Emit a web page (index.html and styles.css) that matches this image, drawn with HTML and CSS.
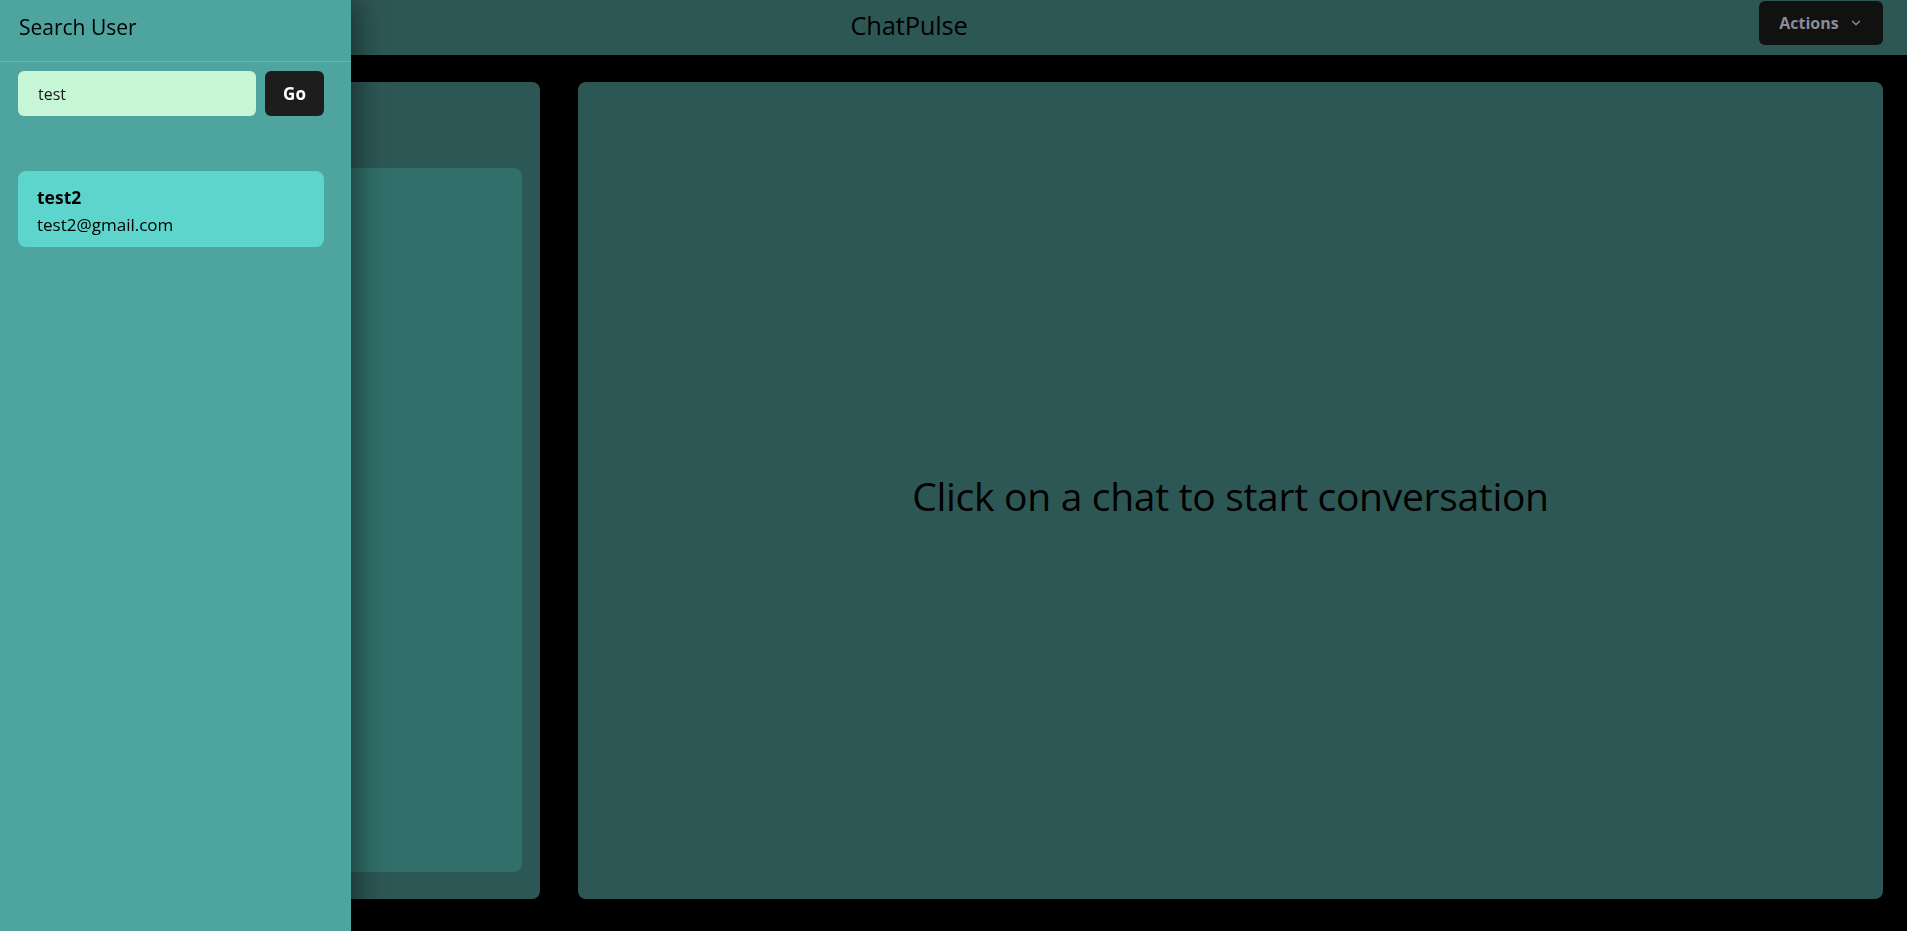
FILE: index.html
```html
<!DOCTYPE html>
<html lang="en">
<head>
<meta charset="utf-8">
<title>ChatPulse</title>
<link rel="stylesheet" href="styles.css">
</head>
<body>
<div class="app">
  <header class="topbar">
    <button class="search-btn" aria-label="Search">
      <svg width="16" height="16" viewBox="0 0 24 24" fill="none" stroke="#ccc" stroke-width="2"><circle cx="11" cy="11" r="7"/><path d="M21 21l-5-5"/></svg>
    </button>
    <div class="brand">ChatPulse</div>
    <button class="actions-btn">Actions
      <svg class="chev" width="14" height="14" viewBox="0 0 24 24" fill="none" stroke="currentColor" stroke-width="2.4" stroke-linecap="round" stroke-linejoin="round"><path d="M6 9l6 6 6-6"/></svg>
    </button>
  </header>
  <main class="workspace">
    <section class="chats-panel">
      <div class="chats-head">My Chats</div>
      <div class="chats-list"></div>
    </section>
    <section class="chat-panel">
      <p class="empty-msg">Click on a chat to start conversation</p>
    </section>
  </main>
</div>

<aside class="drawer">
  <div class="drawer-head">Search User</div>
  <div class="drawer-body">
    <div class="search-row">
      <input class="search-input" type="text" value="test">
      <button class="go-btn">Go</button>
    </div>
    <div class="result-card">
      <div class="result-name">test2</div>
      <div class="result-email">test2@gmail.com</div>
    </div>
  </div>
</aside>
</body>
</html>
```
FILE: styles.css
```css
* { box-sizing: border-box; }
html, body { margin: 0; padding: 0; height: 100%; }
body {
  background: #000;
  font-family: "Open Sans", "Noto Sans", "Liberation Sans", sans-serif;
  color: #000;
  overflow: hidden;
}
.app { display: flex; flex-direction: column; height: 100vh; }

.topbar {
  height: 55px;
  flex: none;
  background: #2d5755;
  display: flex;
  justify-content: space-between;
  align-items: center;
  padding: 0 24px;
}
.search-btn {
  width: 35px; height: 35px;
  background: transparent; border: 0; padding: 0;
}
.brand {
  font-size: 25.5px;
  line-height: 1;
  letter-spacing: -0.2px;
  padding-bottom: 3px;
}
.actions-btn {
  align-self: flex-start;
  margin-top: 1px;
  width: 124px;
  height: 44px;
  background: #111111;
  border: 0;
  border-radius: 6px;
  color: #878d98;
  font-family: inherit;
  font-weight: 700;
  font-size: 16px;
  display: flex;
  align-items: center;
  justify-content: center;
  gap: 10px;
  padding: 0;
}
.chev { color: #878d98; }

.workspace {
  flex: 1;
  display: flex;
  gap: 38px;
  padding: 27px 24px 32px 24px;
  min-height: 0;
}
.chats-panel {
  width: 516px;
  background: #2d5755;
  border-radius: 8px;
  display: flex;
  flex-direction: column;
  padding: 0 18px 27px 18px;
}
.chats-head {
  height: 86px;
  display: flex;
  align-items: center;
  font-size: 26px;
}
.chats-list {
  flex: 1;
  background: #316f6a;
  border-radius: 8px;
}
.chat-panel {
  flex: 1;
  background: #2d5755;
  border-radius: 8px;
  display: flex;
  align-items: center;
  justify-content: center;
}
.empty-msg {
  margin: 0;
  font-size: 39px;
  letter-spacing: -0.3px;
  padding-top: 10px;
}

.drawer {
  position: fixed;
  left: 0; top: 0;
  width: 351px;
  height: 100vh;
  background: #4ea49e;
  box-shadow: 6px 0 28px rgba(0, 0, 0, 0.45);
}
.drawer-head {
  height: 62px;
  padding: 0 19px 7px 19px;
  display: flex;
  align-items: center;
  font-size: 21px;
  border-bottom: 1px solid #6db6b0;
}
.drawer-body {
  padding: 9px 27px 0 18px;
}
.search-row {
  display: flex;
  gap: 9px;
  height: 45px;
}
.search-input {
  flex: 1;
  min-width: 0;
  background: #c6f6d5;
  border: 0;
  border-radius: 6px;
  padding: 0 20px;
  font-family: inherit;
  font-size: 16px;
  color: #1a1a1a;
  outline: none;
}
.go-btn {
  width: 59px;
  background: #1d1d1d;
  color: #fff;
  border: 0;
  border-radius: 6px;
  font-family: inherit;
  font-weight: 700;
  font-size: 17px;
  padding: 0;
}
.result-card {
  margin-top: 55px;
  height: 76px;
  background: #5dd5cc;
  border-radius: 8px;
  padding: 14px 19px 0 19px;
}
.result-name {
  font-weight: 700;
  font-size: 17.5px;
  line-height: 24px;
}
.result-email {
  font-size: 17px;
  line-height: 28px;
  margin-top: 2px;
}
```
